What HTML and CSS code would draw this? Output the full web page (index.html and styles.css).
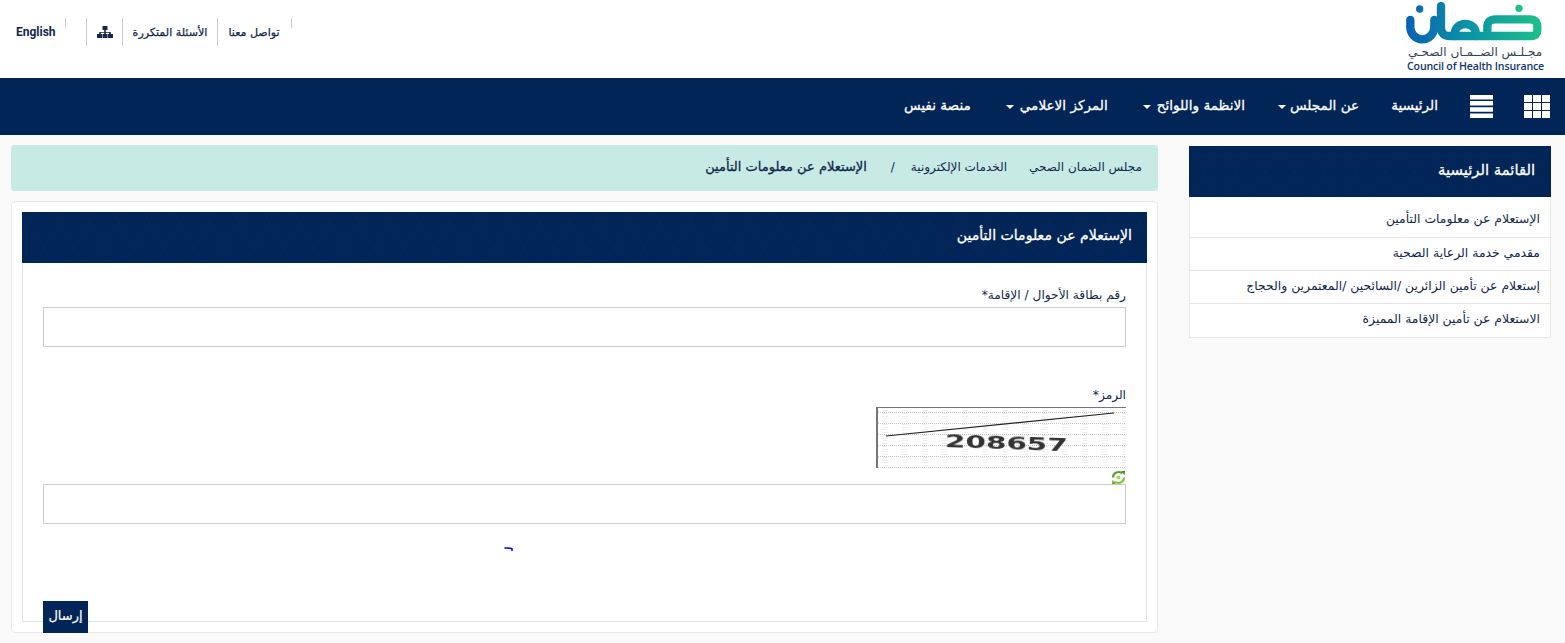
FILE: index.html
```html
<!DOCTYPE html>
<html lang="ar" dir="rtl">
<head>
<meta charset="utf-8">
<title>الإستعلام عن معلومات التأمين</title>
<link rel="stylesheet" href="styles.css">
</head>
<body>
<header class="top">
  <div class="logo">
    <svg class="logo-mark" width="138" height="42" viewBox="0 0 414 126" aria-hidden="true">
      <defs>
        <linearGradient id="lg" gradientUnits="userSpaceOnUse" x1="0" y1="0" x2="414" y2="0">
          <stop offset="0" stop-color="#0a5fb4"/>
          <stop offset=".45" stop-color="#0a93a6"/>
          <stop offset="1" stop-color="#1fc08a"/>
        </linearGradient>
      </defs>
      <g fill="none" stroke="url(#lg)" stroke-width="25" stroke-linecap="round" stroke-linejoin="round">
        <path d="M16 54V76a36 36 0 0 0 72 0V54"/>
        <path d="M108 12V76Q108 102 134 102H150"/>
        <path d="M150 102H212V92A31 26 0 0 0 150 92V102"/>
        <path d="M212 102H380Q397 102 397 84V74Q397 52 375 52H272Q247 52 247 76V102"/>
      </g>
      <circle cx="44" cy="21" r="11" fill="#0a6fb4"/>
      <circle cx="342" cy="19" r="11" fill="#1fc08a"/>
    </svg>
    <div class="logo-ar">مجـلـس الضــمـان الصحـي</div>
    <div class="logo-en" dir="ltr">Council of Health Insurance</div>
  </div>
  <nav class="util">
    <span class="util-tick"></span>
    <a class="util-item util-contact">تواصل معنا</a>
    <a class="util-item">الأسئلة المتكررة</a>
    <a class="util-item util-icon">
      <svg width="16" height="12" viewBox="0 0 16 12" aria-hidden="true"><path fill="#12284c" d="M5.500 0h5v4h-5zM7.200 4h1.600v2h5v2h-1.600V6.800H8.800V8H7.200V6.800H3.800V8H2.200V6h5zM0 8h5v4H0zM5.500 8h5v4h-5zM11 8h5v4h-5z"/></svg>
    </a>
    <span class="util-tick util-tick-far"></span>
    <a class="util-lang" dir="ltr">English</a>
  </nav>
</header>

<nav class="mainnav">
  <svg class="nav-grid" width="26" height="23" viewBox="0 0 26 23" aria-hidden="true"><path fill="#fff" d="M0 0h8v7H0zM9 0h8v7H9zM18 0h8v7h-8zM0 8h8v7H0zM9 8h8v7H9zM18 8h8v7h-8zM0 16h8v7H0zM9 16h8v7H9zM18 16h8v7h-8z"/></svg>
  <svg class="nav-bars" width="23" height="23" viewBox="0 0 23 23" aria-hidden="true"><path fill="#fff" d="M0 0h23v4.500H0zM0 6h23v4.500H0zM0 12.200h23v4.500H0zM0 18.500h23V23H0z"/></svg>
  <a class="nav-link">الرئيسية</a>
  <a class="nav-link has-caret nav-about">عن المجلس</a>
  <a class="nav-link has-caret">الانظمة واللوائح</a>
  <a class="nav-link has-caret">المركز الاعلامي</a>
  <a class="nav-link">منصة نفيس</a>
</nav>

<div class="page">
  <aside class="side">
    <h2 class="side-head">القائمة الرئيسية</h2>
    <ul class="side-list">
      <li class="side-first">الإستعلام عن معلومات التأمين</li>
      <li>مقدمي خدمة الرعاية الصحية</li>
      <li>إستعلام عن تأمين الزائرين /السائحين /المعتمرين والحجاج</li>
      <li>الاستعلام عن تأمين الإقامة المميزة</li>
    </ul>
  </aside>
  <main class="main">
    <div class="crumbs">
      <span>مجلس الضمان الصحي</span>
      <span>الخدمات الإلكترونية</span>
      <span class="crumb-sep">/</span>
      <strong>الإستعلام عن معلومات التأمين</strong>
    </div>
    <section class="card">
      <div class="panel">
        <h1 class="panel-head">الإستعلام عن معلومات التأمين</h1>
        <form class="form">
          <label class="label">رقم بطاقة الأحوال / الإقامة*</label>
          <input class="input" type="text">
          <label class="label label-code">الرمز*</label>
          <div class="captcha">
            <svg class="captcha-bg" width="250" height="61" viewBox="0 0 250 61" aria-hidden="true">
              <defs>
                <pattern id="dots" width="20" height="11" patternUnits="userSpaceOnUse">
                  <path d="M0 5.500H20" stroke="#c6c6c6" stroke-width="1" stroke-dasharray="1 1"/>
                  <path d="M7 0V11M9 0V11M11 0V11" stroke="#e0e0e0" stroke-width="1" stroke-dasharray="1 2"/>
                </pattern>
              </defs>
              <rect width="250" height="61" fill="#fff"/>
              <rect width="250" height="61" fill="url(#dots)"/>
              <rect width="2" height="61" fill="#777"/>
              <rect width="250" height="1" fill="#777"/>
              <path d="M10 29L238 6" stroke="#222" stroke-width="1.200"/>
            </svg>
            <span class="captcha-text" dir="ltr">208657</span>
          </div>
          <div class="refresh-row">
            <svg width="15" height="15" viewBox="0 0 15 15" aria-hidden="true">
              <circle cx="7.500" cy="7.500" r="2" fill="#a9cf6a"/>
              <path d="M2 7.500A5.500 5.500 0 0 1 11.200 3.500" fill="none" stroke="#5f9a2a" stroke-width="2.200"/>
              <path d="M13 7.500A5.500 5.500 0 0 1 3.800 11.500" fill="none" stroke="#8cc040" stroke-width="2.200"/>
              <path d="M9.800 1.200L14 .8 13.600 5z" fill="#4f8c25"/>
              <path d="M5.200 13.800L1 14.200 1.400 10z" fill="#6fa832"/>
            </svg>
          </div>
          <input class="input" type="text">
          <div class="spinner-row">
            <svg width="9" height="5" viewBox="0 0 9 5" aria-hidden="true"><path d="M.5 1Q5 .6 8 1.700V4" fill="none" stroke="#0000e6" stroke-width="1.500"/></svg>
          </div>
          <div class="actions"><button class="send" type="button">إرسال</button></div>
        </form>
      </div>
    </section>
  </main>
</div>
</body>
</html>
```

FILE: styles.css
```css
* { box-sizing: border-box; }
html, body { margin: 0; padding: 0; }
body {
  background: #fafafa;
  color: #12284c;
  font-family: "DejaVu Sans", "Noto Sans", sans-serif;
  height: 643px;
  overflow: hidden;
}
a { color: inherit; text-decoration: none; }

.top {
  height: 78px;
  background: #fff;
  display: flex;
  justify-content: space-between;
  padding: 0 22px 0 16px;
}
.logo { width: 136px; padding-top: 2px; }
.logo-mark { display: block; }
.logo-ar { font-size: 12px; line-height: 14px; margin-top: 1px; text-align: center; color: #333f50; white-space: nowrap; }
.logo-en { font-family: "Open Sans", sans-serif; font-weight: 600; font-size: 10.600px; line-height: 13px; margin-top: 1px; color: #12366c; white-space: nowrap; letter-spacing: -.15px; }

.util { display: flex; align-items: flex-start; padding-top: 18px; }
.util-tick { width: 1px; height: 10px; background: #ccc; }
.util-item {
  height: 28px;
  display: flex;
  align-items: center;
  padding: 0 10px;
  font-size: 11.100px;
  -webkit-text-stroke: .25px #12284c;
  border-left: 1px solid #ccc;
  white-space: nowrap;
}
.util-contact { padding-right: 11px; }
.util-icon { padding: 0 9px 0 10px; }
.util-tick-far { margin-right: 20px; }
.util-lang { font-family: "Roboto", sans-serif; font-weight: 700; font-size: 12px; line-height: 28px; margin-right: 9px; }

.mainnav {
  height: 57px;
  background: #002556;
  color: #fff;
  display: flex;
  align-items: center;
  padding-right: 15px;
}
.nav-grid { margin-left: 31px; }
.nav-bars { margin-left: 32px; }
.nav-link {
  font-size: 13.600px;
  -webkit-text-stroke: .3px #fff;
  white-space: nowrap;
  margin-left: 32px;
  padding-bottom: 3px;
  display: flex;
  align-items: center;
  gap: 6px;
}
.has-caret { margin-left: 35px; }
.nav-about { gap: 4px; margin-left: 33px; }
.has-caret::after {
  content: "";
  width: 0;
  height: 0;
  margin-top: 3px;
  border-left: 4px solid transparent;
  border-right: 4px solid transparent;
  border-top: 4px solid #fff;
}

.page { display: flex; align-items: flex-start; gap: 31px; padding: 10px 14px 0 11px; }
.side { width: 362px; flex: none; padding-top: 1px; }
.side-head, .panel-head {
  margin: 0;
  background-color: #002556;
  background-image: repeating-linear-gradient(60deg, rgba(255,255,255,.012) 0 1px, transparent 1px 26px), repeating-linear-gradient(-60deg, rgba(255,255,255,.012) 0 1px, transparent 1px 26px);
  color: #fff;
  font-weight: 400;
  -webkit-text-stroke: .3px #fff;
}
.side-head {
  height: 51px;
  line-height: 47px;
  padding-right: 16px;
  font-size: 14.800px;
}
.side-list { list-style: none; margin: 0; padding: 0; background: #fff; border: 1px solid #e8e8e8; border-top: 0; }
.side-list li {
  height: 33px;
  line-height: 29px;
  padding-right: 10px;
  font-size: 12.400px;
  border-bottom: 1px solid #e4e4e4;
  white-space: nowrap;
}
.side-list .side-first { height: 41px; line-height: 43px; }
.side-list li:last-child { border-bottom: 0; }

.main { flex: 1; min-width: 0; }
.crumbs {
  height: 46px;
  background: #c7eae4;
  border-radius: 4px;
  display: flex;
  align-items: center;
  padding: 0 16px 3px 0;
  font-size: 12px;
}
.crumbs span:nth-child(2) { margin-right: 22px; }
.crumb-sep { margin: 0 16px; }
.crumbs strong { font-weight: 400; font-size: 13px; margin-right: 8px; -webkit-text-stroke: .3px #12284c; }

.card {
  margin-top: 10px;
  height: 432px;
  background: #fff;
  border: 1px solid #e9e9e9;
  border-radius: 4px;
  padding: 10px;
}
.panel { height: 410px; border: 1px solid #dee2e6; border-top: 0; }
.panel-head {
  margin: 0 -1px;
  height: 51px;
  line-height: 46px;
  padding-right: 15px;
  font-size: 14.100px;
}
.form { padding: 24px 20px 0; }
.label { display: block; font-size: 12.200px; line-height: 16px; height: 20px; }
.input { display: block; width: 100%; height: 40px; border: 1px solid #ccc; background: #fff; outline: 0; }
.label-code { margin-top: 40px; }
.captcha { position: relative; width: 250px; height: 61px; overflow: hidden; }
.captcha-bg { display: block; }
.captcha-text {
  position: absolute;
  top: 24px;
  left: 69px;
  font-family: "DejaVu Sans", sans-serif;
  font-weight: 700;
  font-size: 17px;
  line-height: 20px;
  color: #333;
  transform-origin: left center;
  transform: rotate(2deg) scaleX(1.73);
  filter: blur(.4px);
}
.refresh-row { height: 16px; padding-top: 2px; }
.refresh-row svg { display: block; }
.spinner-row { height: 77px; padding: 23px 613px 0 0; }
.spinner-row svg { display: block; }
.actions { display: flex; justify-content: flex-end; }
.send {
  width: 45px;
  height: 32px;
  border: 0;
  padding: 0 0 3px;
  background: #002556;
  color: #fff;
  font-family: inherit;
  font-size: 13px;
  -webkit-text-stroke: .2px #fff;
}
```
